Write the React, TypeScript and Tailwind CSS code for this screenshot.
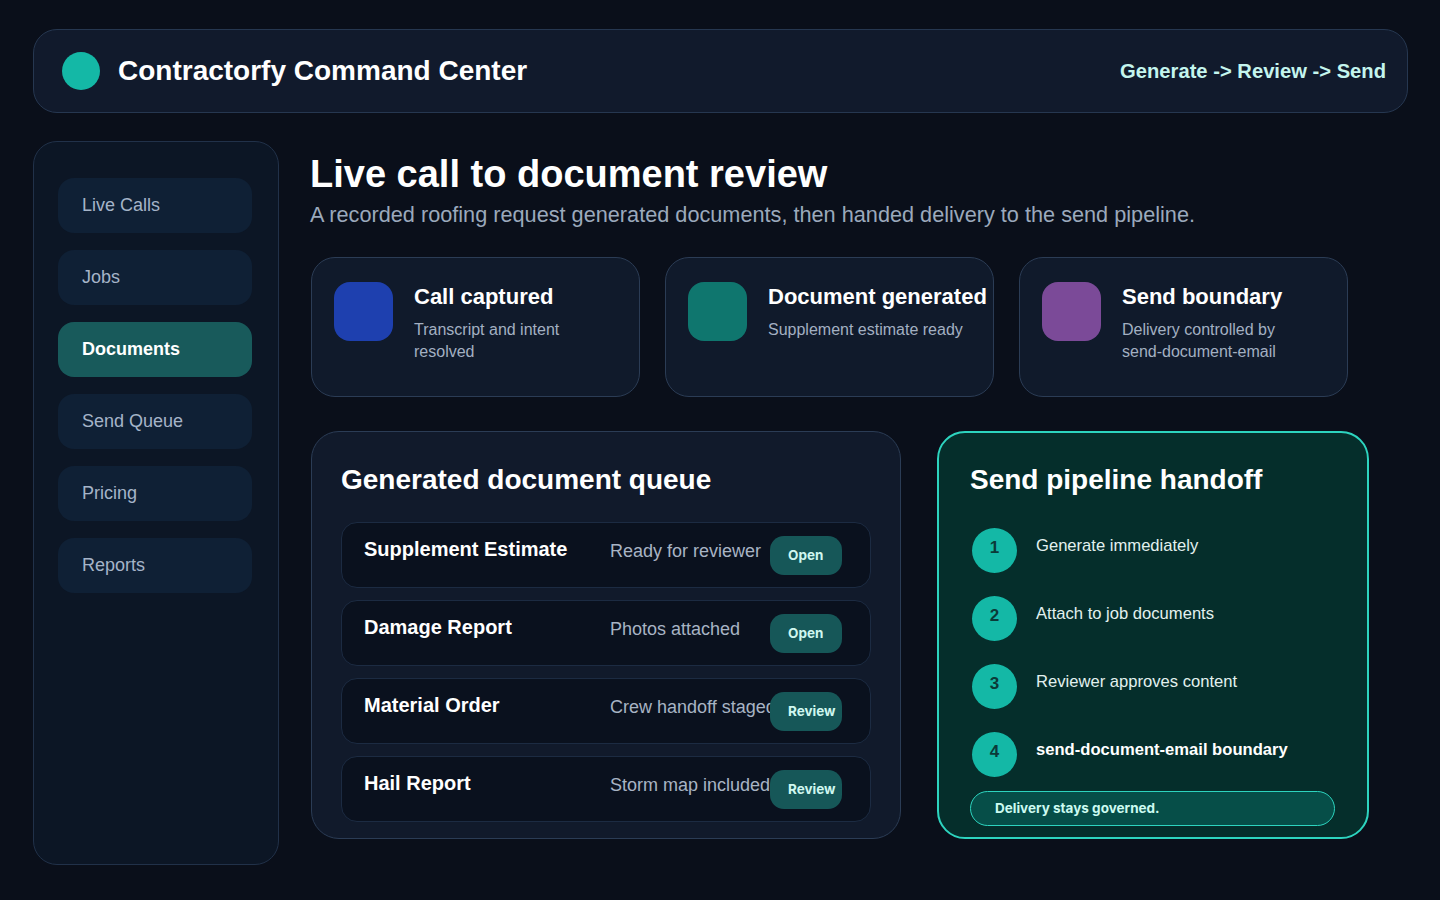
import React from "react";

const nav = ["Live Calls", "Jobs", "Documents", "Send Queue", "Pricing", "Reports"];

const stages: { title: string; body: React.ReactNode; color: string }[] = [
  { title: "Call captured", body: "Transcript and intent resolved", color: "bg-[#1e40af]" },
  { title: "Document generated", body: "Supplement estimate ready", color: "bg-[#0f766e]" },
  {
    title: "Send boundary",
    body: (
      <>
        Delivery controlled by <span className="whitespace-nowrap">send-document-email</span>
      </>
    ),
    color: "bg-[#7b4a98]",
  },
];

const queue = [
  { name: "Supplement Estimate", status: "Ready for reviewer", action: "Open" },
  { name: "Damage Report", status: "Photos attached", action: "Open" },
  { name: "Material Order", status: "Crew handoff staged", action: "Review" },
  { name: "Hail Report", status: "Storm map included", action: "Review" },
];

const steps = [
  { text: "Generate immediately", strong: false },
  { text: "Attach to job documents", strong: false },
  { text: "Reviewer approves content", strong: false },
  { text: "send-document-email boundary", strong: true },
];

export default function App() {
  return (
    <div className="min-h-[900px] w-[1440px] bg-[#0a0f1a] px-[33px] pt-[29px] font-['Liberation_Sans',Arial,sans-serif] text-white">
      {/* Top bar */}
      <header className="flex h-[84px] w-[1375px] items-center justify-between rounded-[24px] border border-[#263750] bg-[#111a2c] pl-[28px] pr-[21px]">
        <div className="flex items-center gap-[18px]">
          <span className="h-[38px] w-[38px] rounded-full bg-[#14b8a6]" />
          <h1 className="text-[28px] font-bold">Contractorfy Command Center</h1>
        </div>
        <span className="text-[20.2px] font-bold text-[#c4f5ee]">Generate -&gt; Review -&gt; Send</span>
      </header>

      <div className="mt-[28px] flex gap-[32px]">
        {/* Sidebar */}
        <aside className="flex h-[724px] w-[246px] flex-col gap-[17px] rounded-[24px] border border-[#213149] bg-[#0c1625] px-[24px] pt-[36px]">
          {nav.map((item) => (
            <div
              key={item}
              className={
                item === "Documents"
                  ? "flex h-[55px] w-[194px] items-center rounded-[16px] bg-[#185a5b] px-[24px] text-[18px] font-bold text-white"
                  : "flex h-[55px] w-[194px] items-center rounded-[16px] bg-[#0f2035] px-[24px] text-[18px] text-[#a5b4c8]"
              }
            >
              {item}
            </div>
          ))}
        </aside>

        {/* Main */}
        <main className="flex-1">
          <h2 className="mt-[10px] -ml-[1px] text-[38px] font-bold leading-[46px]">Live call to document review</h2>
          <p className="mt-[2px] -ml-[1px] text-[21.7px] text-[#9ba9bc]">
            A recorded roofing request generated documents, then handed delivery to the send pipeline.
          </p>

          <div className="mt-[25px] flex gap-[25px]">
            {stages.map((s) => (
              <div
                key={s.title}
                className="flex h-[140px] w-[329px] gap-[21px] rounded-[24px] border border-[#2b3c55] bg-[#101a2b] px-[22px] pt-[24px]"
              >
                <div className={`h-[59px] w-[59px] shrink-0 rounded-[16px] ${s.color}`} />
                <div>
                  <h3 className="whitespace-nowrap text-[22px] font-bold leading-[30px]">{s.title}</h3>
                  <p className="mt-[7px] w-[200px] text-[16px] leading-[22px] text-[#a3b0c2]">{s.body}</p>
                </div>
              </div>
            ))}
          </div>

          <div className="mt-[34px] flex gap-[36px]">
            {/* Queue */}
            <section className="h-[408px] w-[590px] rounded-[28px] border border-[#2b3c55] bg-[#111a2b] px-[29px] pt-[31px]">
              <h3 className="text-[28px] font-bold leading-[34px]">Generated document queue</h3>
              <div className="mt-[25px] flex flex-col gap-[12px]">
                {queue.map((q) => (
                  <div
                    key={q.name}
                    className="grid h-[66px] grid-cols-[246px_160px_72px] items-start rounded-[16px] border border-[#1c2b42] bg-[#0a111e] pl-[22px] pt-[12px]"
                  >
                    <span className="text-[20px] font-bold leading-[28px]">{q.name}</span>
                    <span className="whitespace-nowrap pt-[2px] text-[18px] leading-[28px] text-[#a8b4c4]">{q.status}</span>
                    <span className="relative mt-[1px] flex h-[39px] items-center rounded-[14px] bg-[#165758] pl-[18px] font-['Inter',sans-serif] text-[13.5px] font-bold text-[#cff7f0]">
                      {q.action}
                    </span>
                  </div>
                ))}
              </div>
            </section>

            {/* Pipeline */}
            <section className="h-[408px] w-[432px] rounded-[28px] border-2 border-[#2dd4bf] bg-[#052e2b] px-[31px] pt-[30px]">
              <h3 className="text-[28px] font-bold leading-[34px]">Send pipeline handoff</h3>
              <div className="mt-[31px] flex flex-col gap-[23px]">
                {steps.map((st, i) => (
                  <div key={st.text} className="flex items-start gap-[19px] pl-[2px]">
                    <span className="flex h-[45px] w-[45px] shrink-0 items-center justify-center rounded-full bg-[#14b8a6] pb-[4px] text-[17px] font-bold text-[#0b3a38]">
                      {i + 1}
                    </span>
                    <span
                      className={
                        st.strong
                          ? "pt-[7px] text-[16.6px] font-bold leading-[22px] text-white"
                          : "pt-[7px] text-[16.6px] leading-[22px] text-[#e2f1ef]"
                      }
                    >
                      {st.text}
                    </span>
                  </div>
                ))}
              </div>
              <div className="mt-[14px] flex h-[35px] w-[365px] items-center rounded-full border border-[#2dd4bf] bg-[#064e48] px-[24px] font-['Inter',sans-serif] text-[13.5px] font-bold text-[#ccfbf1]">
                Delivery stays governed.
              </div>
            </section>
          </div>
        </main>
      </div>
    </div>
  );
}
